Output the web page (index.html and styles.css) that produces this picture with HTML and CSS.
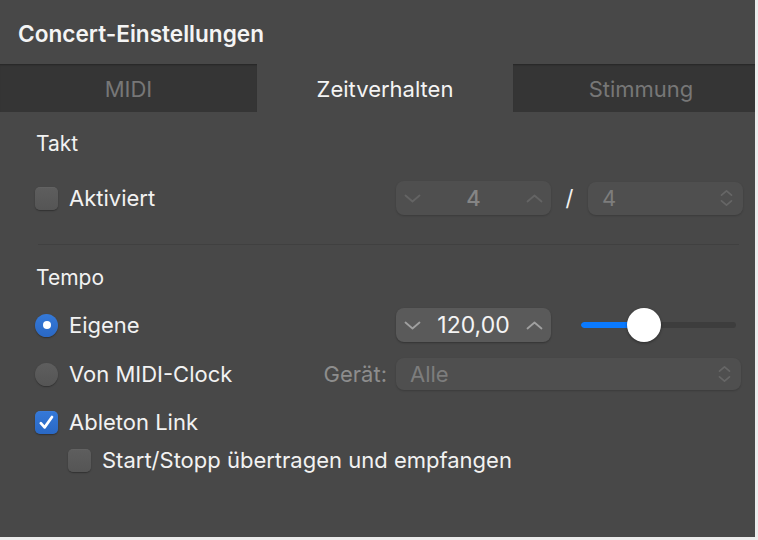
FILE: index.html
```html
<!DOCTYPE html>
<html lang="de">
<head>
<meta charset="utf-8">
<title>Concert-Einstellungen</title>
<link rel="stylesheet" href="styles.css">
</head>
<body>
<div class="panel">
  <header class="header"><h1 class="title">Concert-Einstellungen</h1></header>
  <nav class="tabs">
    <div class="tab tab-a">MIDI</div>
    <div class="tab tab-b active">Zeitverhalten</div>
    <div class="tab tab-c">Stimmung</div>
  </nav>
  <main class="content">
    <div class="section-title takt">Takt</div>
    <div class="row row-takt">
      <div class="left">
        <span class="checkbox"></span><span class="label">Aktiviert</span>
      </div>
      <div class="right">
        <div class="stepper disabled">
          <svg class="chev" width="17" height="9" viewBox="0 0 17 9"><path d="M1.5 1.5 L8.5 7.5 L15.5 1.5" fill="none" stroke="currentColor" stroke-width="1.8" stroke-linecap="round" stroke-linejoin="round"/></svg>
          <span class="value">4</span>
          <svg class="chev" width="17" height="9" viewBox="0 0 17 9"><path d="M1.5 7.5 L8.5 1.5 L15.5 7.5" fill="none" stroke="currentColor" stroke-width="1.8" stroke-linecap="round" stroke-linejoin="round"/></svg>
        </div>
        <span class="slash">/</span>
        <div class="popup disabled popup-small">
          <span class="value">4</span>
          <svg class="updown" width="13" height="18" viewBox="0 0 13 18"><path d="M1.5 6.2 L6.5 1.8 L11.5 6.2 M1.5 11.8 L6.5 16.2 L11.5 11.8" fill="none" stroke="currentColor" stroke-width="1.7" stroke-linecap="round" stroke-linejoin="round"/></svg>
        </div>
      </div>
    </div>
    <div class="separator"></div>
    <div class="section-title tempo">Tempo</div>
    <div class="row row-eigene">
      <div class="left">
        <span class="radio on"></span><span class="label">Eigene</span>
      </div>
      <div class="right">
        <div class="stepper">
          <svg class="chev" width="17" height="9" viewBox="0 0 17 9"><path d="M1.5 1.5 L8.5 7.5 L15.5 1.5" fill="none" stroke="currentColor" stroke-width="1.8" stroke-linecap="round" stroke-linejoin="round"/></svg>
          <span class="value">120,00</span>
          <svg class="chev" width="17" height="9" viewBox="0 0 17 9"><path d="M1.5 7.5 L8.5 1.5 L15.5 7.5" fill="none" stroke="currentColor" stroke-width="1.8" stroke-linecap="round" stroke-linejoin="round"/></svg>
        </div>
        <div class="slider">
          <div class="track"><div class="fill" style="width:64px"></div></div>
          <div class="knob" style="left:46px"></div>
        </div>
      </div>
    </div>
    <div class="row row-clock">
      <div class="left">
        <span class="radio"></span><span class="label">Von MIDI-Clock</span>
        <span class="device-label">Gerät:</span>
      </div>
      <div class="right">
        <div class="popup disabled popup-wide">
          <span class="value">Alle</span>
          <svg class="updown" width="13" height="18" viewBox="0 0 13 18"><path d="M1.5 6.2 L6.5 1.8 L11.5 6.2 M1.5 11.8 L6.5 16.2 L11.5 11.8" fill="none" stroke="currentColor" stroke-width="1.7" stroke-linecap="round" stroke-linejoin="round"/></svg>
        </div>
      </div>
    </div>
    <div class="row row-link">
      <div class="left">
        <span class="checkbox on">
          <svg width="23" height="23" viewBox="0 0 23 23"><path d="M5.8 12.2 L9.6 16.4 L17 6" fill="none" stroke="#fff" stroke-width="2.7" stroke-linecap="round" stroke-linejoin="round"/></svg>
        </span><span class="label">Ableton Link</span>
      </div>
    </div>
    <div class="row row-start">
      <div class="left indent">
        <span class="checkbox"></span><span class="label">Start/Stopp übertragen und empfangen</span>
      </div>
    </div>
  </main>
</div>
</body>
</html>
```
FILE: styles.css
```css
* { box-sizing: border-box; }
html, body { margin: 0; padding: 0; }
body {
  background: #ececec;
  font-family: Inter, "Noto Sans", "Liberation Sans", sans-serif;
  color: #f2f2f2;
  width: 758px;
  height: 540px;
  overflow: hidden;
}
.panel {
  width: 755px;
  height: 537px;
  background: #484848;
  display: flex;
  flex-direction: column;
  overflow: hidden;
}
.header {
  height: 64px;
  display: flex;
  align-items: center;
  padding: 0 0 0 18px;
}
.title {
  margin: 0;
  font-size: 22.6px;
  font-weight: 600;
  color: #f4f4f4;
  position: relative;
  top: 1px;
}
.tabs {
  height: 48px;
  display: flex;
  overflow: hidden;
}
.tab {
  display: flex;
  align-items: center;
  justify-content: center;
  font-size: 22px;
  color: #777;
  background: #353535;
  box-shadow: inset 0 2px 2px -1px rgba(0,0,0,0.3);
  padding-top: 2px;
  flex: none;
}
.tab-a { width: 257px; }
.tab-b { width: 256px; }
.tab-c { width: 256px; }
.tab.active {
  background: #484848;
  color: #f4f4f4;
  box-shadow: none;
}
.content {
  flex: 1;
  padding: 0 12px 0 35px;
  display: flex;
  flex-direction: column;
}
.section-title {
  font-size: 21px;
  height: 24px;
  line-height: 24px;
  padding-left: 1px;
}
.takt { margin-top: 20px; }
.tempo { margin-top: 21px; }
.row {
  display: flex;
  align-items: center;
  height: 36px;
}
.row-takt { margin-top: 24px; }
.row-eigene { margin-top: 17px; }
.row-clock { margin-top: 13px; }
.row-link { margin-top: 12px; }
.row-start { margin-top: 2px; }
.left {
  width: 361px;
  display: flex;
  align-items: center;
  height: 100%;
}
.left.indent { padding-left: 33px; width: auto; }
.right {
  flex: 1;
  display: flex;
  align-items: center;
}
.label {
  font-size: 22px;
  margin-left: 11px;
  color: #f2f2f2;
}
.checkbox {
  width: 23px;
  height: 23px;
  border-radius: 5px;
  background: linear-gradient(#5e5e5e, #555);
  box-shadow: 0 1px 1.5px rgba(0,0,0,0.35), inset 0 0.5px 0 rgba(255,255,255,0.06);
  flex: none;
  display: flex;
}
.checkbox.on {
  background: linear-gradient(#3579d8, #2a68c4);
}
.radio {
  width: 23px;
  height: 23px;
  border-radius: 50%;
  background: linear-gradient(#5e5e5e, #555);
  box-shadow: 0 1px 1.5px rgba(0,0,0,0.35);
  flex: none;
  display: flex;
  align-items: center;
  justify-content: center;
}
.radio.on { background: linear-gradient(#3579d8, #2a68c4); }
.radio.on::after {
  content: "";
  width: 8px;
  height: 8px;
  border-radius: 50%;
  background: #fff;
}
.separator {
  height: 1px;
  background: #404040;
  margin: 28px 4px 0 3px;
}
.stepper {
  width: 155px;
  height: 34px;
  border-radius: 8px;
  background: #5a5a5a;
  box-shadow: 0 1px 2px rgba(0,0,0,0.3);
  display: flex;
  align-items: center;
  justify-content: space-between;
  padding: 0 8px 0 8px;
  color: #a0a0a0;
  flex: none;
}
.stepper .value {
  font-size: 23px;
  color: #f4f4f4;
}
.stepper.disabled {
  background: #4f4f4f;
  color: #646464;
  box-shadow: 0 1px 2px rgba(0,0,0,0.18);
}
.stepper.disabled .value { color: #858585; font-size: 22px; font-weight: 500; }
.slash {
  width: 37px;
  text-align: center;
  font-size: 22px;
  color: #f2f2f2;
}
.popup {
  height: 33px;
  border-radius: 8px;
  background: #4f4f4f;
  box-shadow: 0 1px 2px rgba(0,0,0,0.18);
  display: flex;
  align-items: center;
  justify-content: space-between;
  padding: 0 10px 0 14px;
  color: #666;
}
.popup .value { font-size: 22px; color: #7d7d7d; }
.popup-small { width: 155px; }
.popup-wide { width: 345px; height: 32px; }
.device-label {
  margin-left: auto;
  margin-right: 9px;
  font-size: 22px;
  color: #8d8d8d;
}
.slider {
  position: relative;
  width: 155px;
  height: 36px;
  margin-left: 30px;
  display: flex;
  align-items: center;
}
.track {
  width: 100%;
  height: 6px;
  border-radius: 3px;
  background: #3d3d3d;
  overflow: hidden;
}
.fill {
  height: 100%;
  background: #0a7aff;
  border-radius: 3px;
}
.knob {
  position: absolute;
  top: 1px;
  width: 34px;
  height: 34px;
  border-radius: 50%;
  background: #fff;
  box-shadow: 0 1px 3px rgba(0,0,0,0.4);
}
```
